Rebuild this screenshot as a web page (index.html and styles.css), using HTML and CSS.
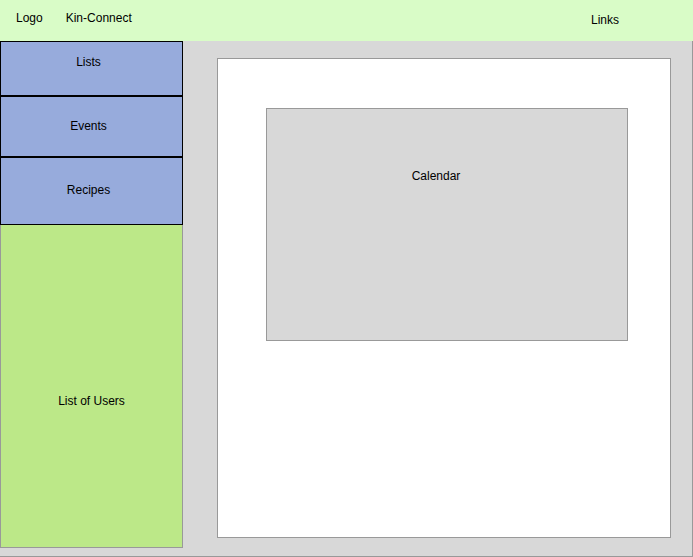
FILE: index.html
```html
<!DOCTYPE html>
<html>
<head>
<meta charset="utf-8">
<link rel="stylesheet" href="styles.css">
</head>
<body>
<div class="page">
  <header class="header">
    <span class="logo">Logo</span>
    <span class="brand">Kin-Connect</span>
    <span class="links">Links</span>
  </header>
  <div class="content">
    <aside class="sidebar">
      <div class="nav-item nav-lists">Lists</div>
      <div class="nav-item nav-events">Events</div>
      <div class="nav-item nav-recipes">Recipes</div>
      <div class="users">List of Users</div>
    </aside>
    <main class="panel">
      <div class="calendar">Calendar</div>
    </main>
  </div>
</div>
</body>
</html>
```
FILE: styles.css
```css
* { box-sizing: border-box; }
html, body { margin: 0; padding: 0; }
body {
  font-family: "Liberation Sans", Arial, Helvetica, sans-serif;
  font-size: 12px;
  color: #000;
  background: #fff;
}
.page {
  width: 693px;
  height: 557px;
  display: flex;
  flex-direction: column;
}
.header {
  height: 41px;
  background: #d9fcc7;
  display: flex;
  align-items: flex-start;
  line-height: 14px;
}
.logo { margin-left: 16px; margin-top: 11px; }
.brand { margin-left: 23px; margin-top: 11px; }
.links { margin-left: auto; margin-right: 74px; margin-top: 13px; }
.content {
  flex: 1;
  background: #d8d8d8;
  border-right: 1px solid #999;
  border-bottom: 1px solid #999;
  display: flex;
  align-items: flex-start;
}
.sidebar {
  width: 183px;
  display: flex;
  flex-direction: column;
}
.nav-item {
  background: #97abdc;
  border: 1px solid #000;
  text-align: center;
  padding-right: 6px;
  line-height: 14px;
}
.nav-lists { height: 55px; padding-top: 13px; }
.nav-events { height: 61px; padding-top: 22px; }
.nav-recipes { height: 68px; padding-top: 25px; }
.users {
  height: 323px;
  background: #bce888;
  border: 1px solid #999;
  border-top: none;
  text-align: center;
  line-height: 14px;
  padding-top: 169px;
}
.panel {
  margin-left: 34px;
  margin-top: 17px;
  width: 454px;
  height: 480px;
  background: #fff;
  border: 1px solid #999;
  padding-left: 48px;
  padding-top: 49px;
}
.calendar {
  width: 362px;
  height: 233px;
  background: #d8d8d8;
  border: 1px solid #999;
  text-align: center;
  padding-right: 22px;
  padding-top: 60px;
  line-height: 14px;
}
```
